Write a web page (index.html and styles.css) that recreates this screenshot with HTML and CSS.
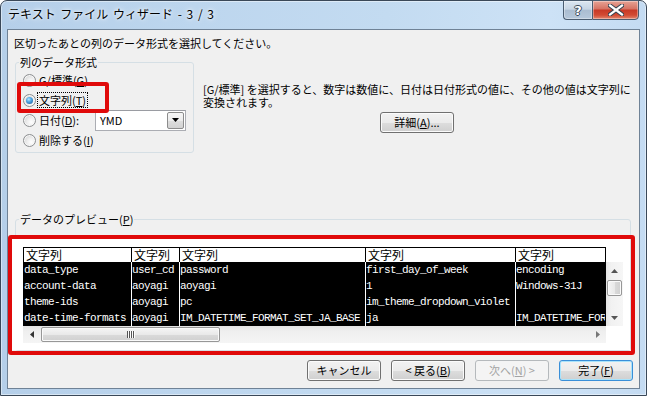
FILE: index.html
```html
<!DOCTYPE html>
<html lang="ja">
<head>
<meta charset="utf-8">
<title>テキスト ファイル ウィザード - 3 / 3</title>
<link rel="stylesheet" href="styles.css">
</head>
<body>
<div class="window">
  <div class="titlebar">
    <div class="title">テキスト ファイル ウィザード - 3 / 3</div>
    <div class="caption">
      <div class="cap-btn help"><span class="help-glyph">?</span></div>
      <div class="cap-btn close">
        <svg width="16" height="12" viewBox="0 0 16 12">
          <path d="M2 1.5 L14 10.5 M14 1.5 L2 10.5" stroke="#33414f" stroke-width="4.2" stroke-linecap="square" fill="none"/>
          <path d="M2 1.5 L14 10.5 M14 1.5 L2 10.5" stroke="#ffffff" stroke-width="2.2" stroke-linecap="square" fill="none"/>
        </svg>
      </div>
    </div>
  </div>
  <div class="client">
    <p class="instr">区切ったあとの列のデータ形式を選択してください。</p>
    <div class="top">
      <div class="group format-group">
        <div class="group-label">列のデータ形式</div>
        <ul class="radio-list">
          <li class="radio-row"><span class="radio"></span><span class="rlabel">G/標準(<u>G</u>)</span></li>
          <li class="radio-row"><span class="radio checked"></span><span class="rlabel focus">文字列(<u>T</u>)</span></li>
          <li class="radio-row"><span class="radio"></span><span class="rlabel date">日付(<u>D</u>):</span>
            <div class="combo"><span class="combo-text">YMD</span>
              <span class="combo-btn"><svg width="7" height="4" viewBox="0 0 7 4"><path d="M0 0 H7 L3.5 4 Z" fill="#000"/></svg></span>
            </div>
          </li>
          <li class="radio-row"><span class="radio"></span><span class="rlabel">削除する(<u>I</u>)</span></li>
        </ul>
        <div class="hl hl-radio"></div>
      </div>
      <div class="desc">
        <p class="desc-text">[G/標準] を選択すると、数字は数値に、日付は日付形式の値に、その他の値は文字列に</p>
        <p class="desc-text">変換されます。</p>
        <button class="btn btn-detail">詳細(<u>A</u>)...</button>
      </div>
    </div>
    <div class="group preview-group">
      <div class="group-label">データのプレビュー(<u>P</u>)</div>
      <div class="preview-panel">
        <div class="preview">
          <div class="g-head">
            <div class="hc">文字列</div>
            <div class="hc">文字列</div>
            <div class="hc">文字列</div>
            <div class="hc">文字列</div>
            <div class="hc">文字列</div>
          </div>
          <div class="g-corner"></div>
          <div class="g-body">
            <div class="dc first">data_type</div><div class="dc">user_cd</div><div class="dc">password</div><div class="dc">first_day_of_week</div><div class="dc">encoding</div>
            <div class="dc first">account-data</div><div class="dc">aoyagi</div><div class="dc">aoyagi</div><div class="dc">1</div><div class="dc">Windows-31J</div>
            <div class="dc first">theme-ids</div><div class="dc">aoyagi</div><div class="dc">pc</div><div class="dc">im_theme_dropdown_violet</div><div class="dc"></div>
            <div class="dc first">date-time-formats</div><div class="dc">aoyagi</div><div class="dc">IM_DATETIME_FORMAT_SET_JA_BASE</div><div class="dc">ja</div><div class="dc">IM_DATETIME_FORMAT_SET_JA</div>
          </div>
          <div class="vscroll">
            <div class="sb-btn"><svg width="7" height="4" viewBox="0 0 7 4"><path d="M0 4 L3.5 0 L7 4 Z" fill="#555"/></svg></div>
            <div class="v-thumb"></div>
            <div class="sb-fill"></div>
            <div class="sb-btn"><svg width="7" height="4" viewBox="0 0 7 4"><path d="M0 0 H7 L3.5 4 Z" fill="#555"/></svg></div>
          </div>
          <div class="hscroll">
            <div class="sb-btn"><svg width="4" height="7" viewBox="0 0 4 7"><path d="M4 0 V7 L0 3.5 Z" fill="#333"/></svg></div>
            <div class="h-thumb"><span class="grip"></span></div>
            <div class="sb-fill"></div>
            <div class="sb-btn"><svg width="4" height="7" viewBox="0 0 4 7"><path d="M0 0 V7 L4 3.5 Z" fill="#777"/></svg></div>
          </div>
          <div class="g-corner2"></div>
        </div>
      </div>
      <div class="hl hl-preview"></div>
    </div>
    <div class="buttons">
      <button class="btn">キャンセル</button>
      <button class="btn">&lt; 戻る(<u>B</u>)</button>
      <button class="btn" disabled>次へ(<u>N</u>) &gt;</button>
      <button class="btn default">完了(<u>F</u>)</button>
    </div>
  </div>
</div>
</body>
</html>
```
FILE: styles.css
```css
* { box-sizing: border-box; }
html, body { margin: 0; padding: 0; }
body {
  width: 647px;
  height: 396px;
  overflow: hidden;
  background: #ffffff;
  font-family: "Noto Sans CJK JP", "Liberation Sans", sans-serif;
  font-size: 11px;
  color: #000;
}
u { text-decoration: underline; text-underline-offset: 1px; }

.window {
  width: 647px;
  height: 396px;
  border: 1px solid #3a4858;
  border-radius: 7px 7px 0 0;
  background: linear-gradient(to right, #b5cfe9 0%, #bdd6ee 30%, #c3dbf1 60%, #cde2f6 85%, #c4dbf2 100%);
  box-shadow: inset 0 0 0 1px rgba(255,255,255,0.45);
  padding: 0 6px 6px;
  display: flex;
  flex-direction: column;
}

.titlebar {
  height: 28px;
  flex: none;
  display: flex;
  align-items: flex-start;
}
.title {
  flex: 1;
  padding-left: 1px;
  font-size: 12px;
  line-height: 26px;
  word-spacing: 2px;
  color: #000;
  text-shadow: 0 0 6px rgba(255,255,255,0.9), 0 0 3px rgba(255,255,255,0.9);
  white-space: nowrap;
}
.caption {
  display: flex;
  margin-top: -1px;
  margin-right: 1px;
}
.cap-btn {
  height: 20px;
  border: 1px solid #4a5c70;
  display: flex;
  align-items: center;
  justify-content: center;
  box-shadow: inset 0 0 0 1px rgba(255,255,255,0.35);
}
.help {
  width: 29px;
  border-right: none;
  border-radius: 0 0 0 4px;
  background: linear-gradient(#dbe6f1 0%, #c7d5e4 45%, #abbdd1 52%, #b6c8db 100%);
}
.help-glyph {
  font-family: "DejaVu Sans", sans-serif;
  font-weight: bold;
  font-size: 13px;
  line-height: 13px;
  color: #fff;
  text-shadow: 1px 0 0 #3b4a5a, -1px 0 0 #3b4a5a, 0 1px 0 #3b4a5a, 0 -1px 0 #3b4a5a;
}
.close {
  width: 47px;
  border-radius: 0 0 4px 0;
  background: linear-gradient(#e7a395 0%, #d77566 42%, #c83a27 52%, #d24a33 78%, #e2876f 100%);
}

.client {
  flex: 1;
  border: 1px solid #6f8296;
  background: #f0f0f0;
  display: flex;
  flex-direction: column;
}
.instr {
  margin: 0;
  padding: 6px 0 0 6px;
  line-height: 14px;
  white-space: nowrap;
}

.top {
  display: flex;
  align-items: flex-start;
  margin-top: 12px;
}
.group {
  border: 1px solid #d5dfe5;
  border-radius: 3px;
  position: relative;
}
.group-label {
  margin: -8px 0 0 3px;
  padding: 0 1px;
  background: #f0f0f0;
  line-height: 14px;
  width: max-content;
}
.format-group {
  width: 179px;
  margin-left: 7px;
  padding-bottom: 2px;
  flex: none;
}
.radio-list {
  list-style: none;
  margin: 1px 0 0;
  padding: 0 0 0 7px;
}
.radio-row {
  height: 20px;
  display: flex;
  align-items: center;
}
.radio {
  width: 13px;
  height: 13px;
  flex: none;
  border-radius: 50%;
  border: 1px solid #8d8f91;
  background: radial-gradient(circle at 65% 65%, #ffffff 0%, #f0f0f0 35%, #d6d6d6 80%, #c9c9c9 100%);
  box-shadow: inset 0 0 0 1px #f7f7f7;
  display: flex;
  align-items: center;
  justify-content: center;
}
.radio.checked::after {
  content: "";
  width: 7px;
  height: 7px;
  border-radius: 50%;
  background: radial-gradient(circle at 40% 35%, #b6e6ff 0%, #56aee9 35%, #1d64a8 85%);
}
.rlabel {
  margin-left: 1px;
  border: 1px solid transparent;
  padding: 0 1px;
  line-height: 14px;
  white-space: nowrap;
}
.rlabel.focus { border: 1px dotted #000; }
.rlabel.date { width: 58px; flex: none; }
.combo {
  width: 91px;
  height: 21px;
  flex: none;
  border: 1px solid #abadb3;
  border-top-color: #9a9ca2;
  background: #fff;
  display: flex;
  align-items: center;
  padding-left: 4px;
}
.combo-text { line-height: 14px; }
.combo-btn {
  margin-left: auto;
  margin-right: 1px;
  width: 17px;
  height: 17px;
  border: 1px solid #8c8c8c;
  border-radius: 2px;
  background: linear-gradient(#f6f6f6 0%, #ececec 50%, #dedede 51%, #d2d2d2 100%);
  display: flex;
  align-items: center;
  justify-content: center;
}

.desc {
  flex: 1;
  margin: 21px 8px 0 9px;
  display: flex;
  flex-direction: column;
  align-items: center;
}
.desc-text {
  margin: 0;
  line-height: 13px;
  white-space: nowrap;
  align-self: flex-start;
}
.btn-detail { margin-top: 3px; width: 73px; }

.btn {
  width: 74px;
  height: 21px;
  border: 1px solid #707070;
  border-radius: 3px;
  background: linear-gradient(#f2f2f2 0%, #ebebeb 50%, #dddddd 51%, #cfcfcf 100%);
  box-shadow: inset 0 0 0 1px #fbfbfb;
  font-family: "Noto Sans CJK JP", "Liberation Sans", sans-serif;
  font-size: 11px;
  line-height: 17px;
  color: #000;
  padding: 0;
  white-space: nowrap;
}
.btn.default {
  border-color: #3a8fd8;
  box-shadow: inset 0 0 0 1px #a9e3fb;
}
.btn:disabled {
  border-color: #b5b9bc;
  background: #f4f4f4;
  box-shadow: none;
  color: #a3a3a3;
}

.preview-group {
  margin: 66px 8px 0 7px;
}
.preview-panel {
  margin: 13px 0 0 -4px;
  height: 111px;
  background: #ffffff;
  padding: 8px 0 0 11px;
}
.preview {
  display: grid;
  grid-template-columns: 583px 17px;
  grid-template-rows: 15px 64px 17px;
}
.g-head {
  display: grid;
  grid-template-columns: 108px 48px 186px 150px 90px;
  border-top: 1px solid #000;
  border-right: 1px solid #000;
  background: #fff;
}
.hc {
  border-left: 1px solid #000;
  font-size: 12px;
  line-height: 14px;
  padding-left: 2px;
  white-space: nowrap;
}
.g-corner, .g-corner2 { background: #fff; }
.g-body {
  display: grid;
  grid-template-columns: 108px 48px 186px 150px 90px;
  grid-auto-rows: 16px;
  background: #000;
  color: #fff;
  border-right: 1px solid #000;
  font-family: "Liberation Mono", "DejaVu Sans Mono", monospace;
  font-size: 11px;
  letter-spacing: -0.6px;
}
.dc {
  border-left: 1px solid #fff;
  line-height: 16px;
  overflow: hidden;
  white-space: nowrap;
}
.dc.first { border-left-color: #000; }

.vscroll {
  display: flex;
  flex-direction: column;
  background: linear-gradient(to right, #e4e4e4 0%, #f1f1f1 30%, #f6f6f6 100%);
}
.sb-btn {
  width: 17px;
  height: 17px;
  flex: none;
  display: flex;
  align-items: center;
  justify-content: center;
}
.sb-fill { flex: 1; }
.v-thumb {
  margin: 1px auto 0;
  width: 15px;
  height: 16px;
  flex: none;
  border: 1px solid #979797;
  border-radius: 2px;
  background: linear-gradient(to right, #f5f5f5 0%, #e9e9e9 50%, #dadada 51%, #d0d0d0 100%);
  box-shadow: inset 0 0 0 1px #fafafa;
}
.hscroll {
  display: flex;
  background: linear-gradient(#e4e4e4 0%, #efefef 30%, #f5f5f5 100%);
}
.h-thumb {
  margin: 1px 0 0 1px;
  width: 179px;
  height: 15px;
  flex: none;
  border: 1px solid #979797;
  border-radius: 2px;
  background: linear-gradient(#f5f5f5 0%, #e9e9e9 50%, #dadada 51%, #d0d0d0 100%);
  box-shadow: inset 0 0 0 1px #fafafa;
  display: flex;
  align-items: center;
  justify-content: center;
}
.grip {
  width: 8px;
  height: 7px;
  background: repeating-linear-gradient(to right, #555 0 1px, #fdfdfd 1px 2px);
}

.hl {
  position: absolute;
  border: 4px solid #e00a0a;
  border-radius: 3px;
  pointer-events: none;
}
.hl-radio {
  left: 1px;
  top: 19px;
  width: 92px;
  height: 31px;
}
.hl-preview {
  left: -8px;
  top: 15px;
  width: 627px;
  height: 120px;
}

.buttons {
  display: flex;
  justify-content: flex-end;
  gap: 10px;
  margin-top: 9px;
  padding-right: 6px;
}
```
